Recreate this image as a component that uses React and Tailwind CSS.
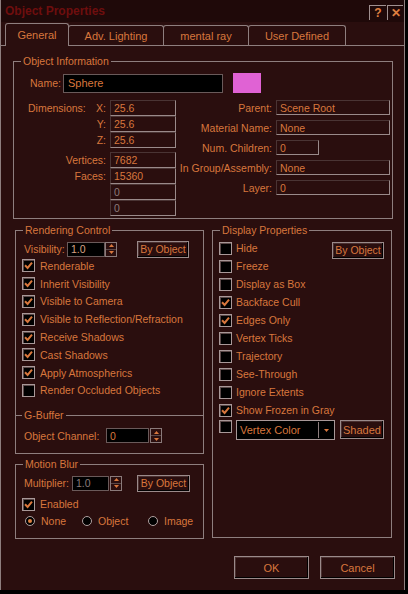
import React from 'react';

const Field = ({ w, h = 'h-[16px]', dim, children }) => (
  <div
    className={`${w} ${h} shrink-0 flex items-center px-[3px] border border-t-[#4a3434] border-l-[#4a3434] border-r-[#9a8a8a] border-b-[#9a8a8a] ${
      dim ? 'text-[#8a7a7a]' : 'text-[#d8773d]'
    }`}
  >
    {children}
  </div>
);

const Check = ({ on }) => (
  <span className="w-[13px] h-[13px] shrink-0 flex items-center justify-center bg-black border border-[#a89898] shadow-[inset_1px_1px_0_#5a4848]">
    {on && (
      <svg width="9" height="9" viewBox="0 0 9 9">
        <path d="M1 4.3 L3.6 7 L8 1.6" stroke="#d8773d" strokeWidth="2" fill="none" />
      </svg>
    )}
  </span>
);

const CheckRow = ({ on, label, children }) => (
  <div className="h-[17.8px] flex items-center">
    <Check on={on} />
    <span className="ml-[5px]">{label}</span>
    {children}
  </div>
);

const Spin = () => (
  <span className="w-[12px] h-[15px] shrink-0 flex flex-col border border-[#8a7a7a]">
    <span className="flex-1 flex items-center justify-center border-b border-[#5a4848]">
      <svg width="5" height="3" viewBox="0 0 5 3">
        <path d="M0 3 L2.5 0 L5 3Z" fill="#d8773d" />
      </svg>
    </span>
    <span className="flex-1 flex items-center justify-center">
      <svg width="5" height="3" viewBox="0 0 5 3">
        <path d="M0 0 L5 0 L2.5 3Z" fill="#d8773d" />
      </svg>
    </span>
  </span>
);

const Btn = ({ className, children }) => (
  <button
    className={`shrink-0 flex items-center justify-center border border-[#9a8a8a] shadow-[inset_-1px_-1px_0_#000,inset_1px_1px_0_#4a3030] text-[#d8773d] ${className}`}
  >
    {children}
  </button>
);

const Radio = ({ on }) => (
  <span className="w-[10px] h-[10px] shrink-0 rounded-full bg-black border border-[#b0a0a0] flex items-center justify-center">
    {on && <span className="w-[4px] h-[4px] rounded-full bg-[#e08040]" />}
  </span>
);

const Legend = ({ children }) => (
  <legend className="ml-[7px] px-[2px] leading-[12px]">{children}</legend>
);

const Separator = ({ label }) => (
  <div className="h-[12px] flex items-center">
    <div className="w-[6px] border-t border-[#8e7e7e]" />
    <span className="px-[2px] leading-[12px]">{label}</span>
    <div className="flex-1 border-t border-[#8e7e7e]" />
  </div>
);

const TABS = [
  { name: 'General', w: 'w-[64px]', active: true },
  { name: 'Adv. Lighting', w: 'w-[96px]' },
  { name: 'mental ray', w: 'w-[86px]' },
  { name: 'User Defined', w: 'w-[98px]' },
];

const RENDER_OPTS = [
  ['Renderable', true],
  ['Inherit Visibility', true],
  ['Visible to Camera', true],
  ['Visible to Reflection/Refraction', true],
  ['Receive Shadows', true],
  ['Cast Shadows', true],
  ['Apply Atmospherics', true],
  ['Render Occluded Objects', false],
];

const DISPLAY_OPTS = [
  ['Freeze', false],
  ['Display as Box', false],
  ['Backface Cull', true],
  ['Edges Only', true],
  ['Vertex Ticks', false],
  ['Trajectory', false],
  ['See-Through', false],
  ['Ignore Extents', false],
  ['Show Frozen in Gray', true],
];

const INFO_RIGHT = [
  ['Parent:', 'Scene Root', 'w-[114px]'],
  ['Material Name:', 'None', 'w-[114px]'],
  ['Num. Children:', '0', 'w-[43px]'],
  ['In Group/Assembly:', 'None', 'w-[114px]'],
  ['Layer:', '0', 'w-[114px]'],
];

export default function App() {
  return (
    <div className="w-[408px] h-[594px] bg-black overflow-hidden font-['Liberation_Sans',Arial,sans-serif] text-[10.5px] leading-[12px] text-[#d8773d]">
      <div className="w-[405px] h-[590px] bg-[#2a0e0e] border-x border-[#8e7e7e] flex flex-col">
        {/* Title bar */}
        <div className="h-[22px] shrink-0 flex items-center justify-between pl-[4px] pr-[1px] bg-[#1f0909]">
          <span className="text-[12px] font-bold text-[#6e0e0e]">Object Properties</span>
          <div className="flex gap-[1px] mt-[2px]">
            <span className="w-[17px] h-[15px] flex items-center justify-center border-l border-t border-[#a09090] text-[12px] font-bold text-[#e08040]">?</span>
            <span className="w-[16px] h-[15px] flex items-center justify-center border-l border-t border-[#a09090] text-[12px] font-bold text-[#e08040]">✕</span>
          </div>
        </div>

        {/* Tabs */}
        <div className="h-[23px] shrink-0 flex items-end pl-[4px]">
          {TABS.map((t) => (
            <div
              key={t.name}
              className={`${t.w} -ml-px first:ml-0 flex items-center justify-center border-x border-t border-[#8e7e7e] rounded-t-[3px] text-[11px] ${
                t.active ? 'h-[23px] -mb-px relative z-10 bg-[#2a0e0e]' : 'h-[20px]'
              }`}
            >
              {t.name}
            </div>
          ))}
        </div>

        {/* Panel */}
        <div className="flex-1 border-t border-[#8e7e7e] pl-[12px] pr-[9px]">
          {/* Object Information */}
          <fieldset className="mt-[9px] w-[380px] h-[164px] border border-[#8e7e7e]">
            <Legend>Object Information</Legend>
            <div className="mt-[6px] flex items-center pl-[16px]">
              <span className="w-[33px]">Name:</span>
              <div className="w-[160px] h-[19px] bg-black border border-[#6a5a5a] px-[4px] flex items-center text-[11px]">Sphere</div>
              <div className="ml-[10px] w-[28px] h-[20px] bg-[#e062d4]" />
            </div>
            <div className="mt-[7px] flex">
              <div className="w-[162px] flex flex-col">
                {[
                  ['X:', '25.6'],
                  ['Y:', '25.6'],
                  ['Z:', '25.6'],
                ].map(([l, v], i) => (
                  <div key={l} className="h-[16px] flex items-center">
                    <div className="w-[97px] flex justify-between pl-[14px] pr-[4px]">
                      <span>{i === 0 ? 'Dimensions:' : ''}</span>
                      <span>{l}</span>
                    </div>
                    <Field w="w-[66px]">{v}</Field>
                  </div>
                ))}
                <div className="mt-[4px]" />
                {[
                  ['Vertices:', '7682'],
                  ['Faces:', '15360'],
                  ['', '0'],
                  ['', '0'],
                ].map(([l, v], i) => (
                  <div key={i} className="h-[16px] flex items-center">
                    <div className="w-[97px] text-right pr-[4px]">{l}</div>
                    <Field w="w-[66px]" dim={i > 1}>
                      {v}
                    </Field>
                  </div>
                ))}
              </div>
              <div className="flex flex-col gap-[5px]">
                {INFO_RIGHT.map(([l, v, w]) => (
                  <div key={l} className="h-[15px] flex items-center">
                    <div className="w-[100px] text-right pr-[4px] whitespace-nowrap">{l}</div>
                    <Field w={w} h="h-[15px]">
                      {v}
                    </Field>
                  </div>
                ))}
              </div>
            </div>
          </fieldset>

          {/* Lower groups */}
          <div className="mt-[5px] ml-[2px] flex gap-[8px]">
            <div className="w-[189px] flex flex-col">
              <fieldset className="h-[230px] border border-[#8e7e7e]">
                <Legend>Rendering Control</Legend>
                <div className="mt-[5px] h-[16px] flex items-center pl-[8px]">
                  <span className="w-[43px]">Visibility:</span>
                  <div className="w-[38px] h-[15px] bg-black border border-[#6a5a5a] px-[3px] flex items-center text-[#d8a080]">1.0</div>
                  <Spin />
                  <Btn className="ml-[20px] w-[52px] h-[17px]">By Object</Btn>
                </div>
                <div className="pl-[6px]">
                  {RENDER_OPTS.map(([l, on]) => (
                    <CheckRow key={l} on={on} label={l} />
                  ))}
                </div>
                <div className="mt-[10px]">
                  <Separator label="G-Buffer" />
                </div>
                <div className="mt-[7px] h-[15px] flex items-center pl-[8px]">
                  <span className="w-[82px]">Object Channel:</span>
                  <div className="w-[43px] h-[15px] bg-black border border-[#6a5a5a] px-[3px] flex items-center">0</div>
                  <span className="ml-[1px]">
                    <Spin />
                  </span>
                </div>
              </fieldset>

              <fieldset className="mt-[4px] h-[81px] border border-[#8e7e7e]">
                <Legend>Motion Blur</Legend>
                <div className="mt-[5px] h-[16px] flex items-center pl-[8px]">
                  <span className="w-[48px]">Multiplier:</span>
                  <div className="w-[37px] h-[15px] bg-black border border-[#6a5a5a] px-[3px] flex items-center text-[#8a7a7a]">1.0</div>
                  <span className="ml-[1px]">
                    <Spin />
                  </span>
                  <Btn className="ml-[15px] w-[53px] h-[17px]">By Object</Btn>
                </div>
                <div className="mt-[4px] h-[18px] flex items-center pl-[6px]">
                  <Check on />
                  <span className="ml-[5px]">Enabled</span>
                </div>
                <div className="h-[16px] flex items-center pl-[9px]">
                  <Radio on />
                  <span className="ml-[6px] w-[41px]">None</span>
                  <Radio />
                  <span className="ml-[6px] w-[50px]">Object</span>
                  <Radio />
                  <span className="ml-[6px]">Image</span>
                </div>
              </fieldset>
            </div>

            <fieldset className="w-[180px] h-[314px] border border-[#8e7e7e]">
              <Legend>Display Properties</Legend>
              <div className="mt-[3px] pl-[6px] pr-[7px]">
                <div className="h-[18px] flex items-center">
                  <Check />
                  <span className="ml-[4px] flex-1">Hide</span>
                  <Btn className="w-[52px] h-[17px] mt-[4px]">By Object</Btn>
                </div>
                {DISPLAY_OPTS.map(([l, on]) => (
                  <div key={l} className="h-[18px] flex items-center">
                    <Check on={on} />
                    <span className="ml-[4px]">{l}</span>
                  </div>
                ))}
                <div className="mt-[1px] flex items-start">
                  <Check />
                  <div className="ml-[4px] w-[99px] h-[20px] bg-black border border-[#a89898] flex items-center pl-[3px] text-[11px]">
                    <span className="flex-1">Vertex Color</span>
                    <span className="w-[15px] h-[16px] mr-[1px] border-l border-[#8e7e7e] flex items-center justify-center">
                      <svg width="5" height="3" viewBox="0 0 5 3">
                        <path d="M0 0 L5 0 L2.5 3Z" fill="#d8773d" />
                      </svg>
                    </span>
                  </div>
                  <Btn className="ml-[5px] w-[44px] h-[19px] text-[11px]">Shaded</Btn>
                </div>
              </div>
            </fieldset>
          </div>

          {/* Footer */}
          <div className="mt-[17px] flex justify-end gap-[11px]">
            <Btn className="w-[75px] h-[23px] text-[11px]">OK</Btn>
            <Btn className="w-[75px] h-[23px] text-[11px]">Cancel</Btn>
          </div>
        </div>
      </div>
    </div>
  );
}
